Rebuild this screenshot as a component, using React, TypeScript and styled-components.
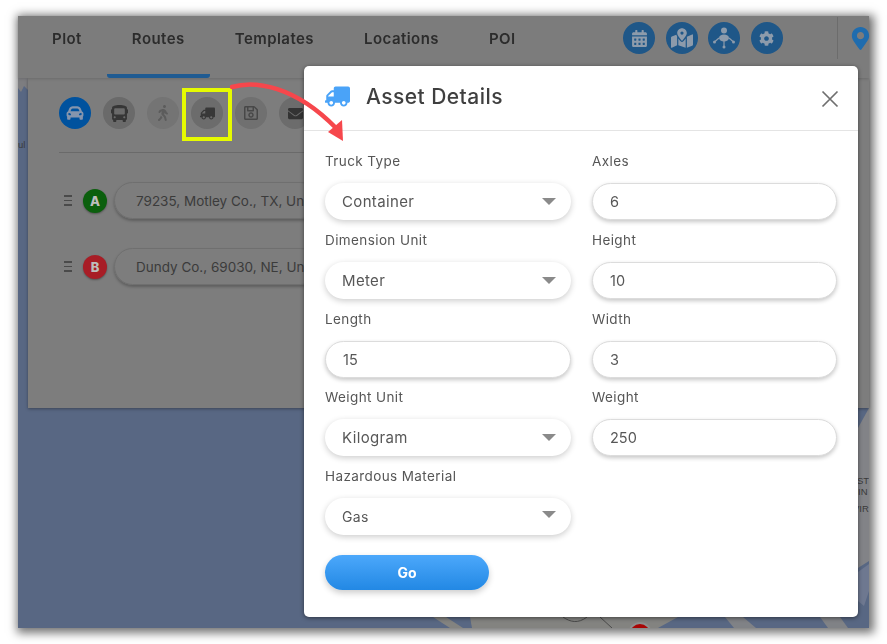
import { ReactNode } from "react";
import styled, { createGlobalStyle } from "styled-components";
import {
    FaBus,
    FaCalendarAlt,
    FaCarAlt,
    FaCog,
    FaEnvelope,
    FaMapMarkedAlt,
    FaMapMarkerAlt,
    FaRegSave,
    FaTruck,
    FaWalking,
} from "react-icons/fa";

const tabs = ["Plot", "Routes", "Templates", "Locations", "POI"];

const NetworkIcon = () => (
    <svg width="24" height="24" viewBox="0 0 24 24" fill="currentColor" stroke="currentColor">
        <circle cx="12" cy="4.5" r="3" stroke="none" />
        <ellipse cx="12" cy="12" rx="5" ry="3.4" stroke="none" />
        <path d="M7 12 L3 15.5 M17 12 L21 15.5 M12 15 V20" strokeWidth="1.2" fill="none" />
        <circle cx="2.5" cy="16" r="1.5" stroke="none" />
        <circle cx="21.5" cy="16" r="1.5" stroke="none" />
        <circle cx="12" cy="21" r="1.5" stroke="none" />
    </svg>
);

const MapBackdrop = () => (
    <MapSvg viewBox="0 0 851 612">
        <rect width="851" height="612" fill="#586783" />
        <path d="M0 62 H10 V74 L6 70 L3 76 L0 72 Z" fill="#7d7d80" />
        <path d="M840 412 L851 392 V545 L840 552 Z" fill="#828387" />
        <path d="M840 556 L851 548 V575 L846 590 L840 585 Z" fill="#6e7890" />
        <path d="M432 612 L415 601 H428 L445 612 Z" fill="#838380" />
        <path d="M454 612 L452 601 H660 L640 612 Z" fill="#838380" />
        <path d="M707 601 H725 L738 612 H716 Z" fill="#808286" />
        <path d="M802 601 H822 L830 612 H810 Z" fill="#808286" />
        <path d="M545 601 C552 606 560 608 569 601 M582 601 L594 612" fill="none" stroke="#4a4a4a" strokeWidth="1" />
        <circle cx="622" cy="618" r="12" fill="#8e8e8e" />
        <circle cx="622" cy="618" r="10" fill="#a80505" />
        <MapLabel x="839" y="468">ST</MapLabel>
        <MapLabel x="840" y="479">IN</MapLabel>
        <MapLabel x="835" y="496">VIR</MapLabel>
        <MapLabel x="0" y="132" fill="#27365a">ul</MapLabel>
    </MapSvg>
);

const Field = ({ label, children }: { label: string; children: ReactNode }) => (
    <FieldBox>
        <Label>{label}</Label>
        {children}
    </FieldBox>
);

const App = () => {
    return (
        <Frame>
            <GlobalStyle />
            <MapBackdrop />
            <Nav>
                <Tabs>
                    {tabs.map((tab) => (
                        <Tab key={tab} $active={tab === "Routes"}>
                            {tab}
                        </Tab>
                    ))}
                </Tabs>
                <NavTools>
                    <NavButton><FaCalendarAlt size={17} /></NavButton>
                    <NavButton><FaMapMarkedAlt size={22} /></NavButton>
                    <NavButton><NetworkIcon /></NavButton>
                    <NavButton><FaCog size={15} /></NavButton>
                </NavTools>
                <PinCell>
                    <FaMapMarkerAlt size={23} />
                </PinCell>
            </Nav>
            <Panel>
                <ModeRow>
                    <ModeButton $bg="#00529e" $fg="#8595ad"><FaCarAlt size={18} /></ModeButton>
                    <ModeButton $bg="#6a6a6a" $fg="#363636"><FaBus size={17} /></ModeButton>
                    <ModeButton $bg="#747474" $fg="#5c5c5c"><FaWalking size={16} /></ModeButton>
                    <ModeButton $bg="#6c6c6c" $fg="#383838"><FlippedTruck size={15} /></ModeButton>
                    <ModeButton $bg="#707070" $fg="#484848"><FaRegSave size={16} /></ModeButton>
                    <ModeButton $bg="#6c6c6c" $fg="#333333"><FaEnvelope size={15} /></ModeButton>
                </ModeRow>
                <Divider />
                <StopRow>
                    <Handle><i /><i /><i /></Handle>
                    <Badge $bg="#0b5f0d">A</Badge>
                    <StopPill>79235, Motley Co., TX, Uni</StopPill>
                </StopRow>
                <StopRow>
                    <Handle><i /><i /><i /></Handle>
                    <Badge $bg="#a81d26">B</Badge>
                    <StopPill>Dundy Co., 69030, NE, Un</StopPill>
                </StopRow>
            </Panel>

            <Modal>
                <ModalHeader>
                    <FlippedTruck size={25} color="#4aa3f8" />
                    <ModalTitle>Asset Details</ModalTitle>
                    <CloseButton>
                        <svg width="18" height="18" viewBox="0 0 18 18" fill="none" stroke="#6f6f6f" strokeWidth="1.7">
                            <path d="M1.5 1.5 L16.5 16.5 M16.5 1.5 L1.5 16.5" />
                        </svg>
                    </CloseButton>
                </ModalHeader>
                <ModalBody>
                    <Field label="Truck Type">
                        <SelectBox>Container</SelectBox>
                    </Field>
                    <Field label="Axles">
                        <TextBox readOnly value="6" />
                    </Field>
                    <Field label="Dimension Unit">
                        <SelectBox>Meter</SelectBox>
                    </Field>
                    <Field label="Height">
                        <TextBox readOnly value="10" />
                    </Field>
                    <Field label="Length">
                        <TextBox readOnly value="15" />
                    </Field>
                    <Field label="Width">
                        <TextBox readOnly value="3" />
                    </Field>
                    <Field label="Weight Unit">
                        <SelectBox>Kilogram</SelectBox>
                    </Field>
                    <Field label="Weight">
                        <TextBox readOnly value="250" />
                    </Field>
                    <Field label="Hazardous Material">
                        <SelectBox $small>Gas</SelectBox>
                    </Field>
                </ModalBody>
                <GoButton type="button">Go</GoButton>
            </Modal>

            <Callout />
            <ArrowSvg width="130" height="70" viewBox="0 0 130 70">
                <path d="M2 9 C25 2 65 8 106 50" fill="none" stroke="#f6474c" strokeWidth="4.5" strokeLinecap="round" />
                <path d="M113 63 L98 54 L112 42 Z" fill="#f6474c" />
            </ArrowSvg>
        </Frame>
    );
};

const GlobalStyle = createGlobalStyle`
    body {
        margin: 0;
        background: #ffffff;
        overflow: hidden;
        font-family: Inter, "Open Sans", sans-serif;
    }
`;

const Frame = styled.div`
    position: relative;
    width: 851px;
    height: 612px;
    margin: 16px 18px;
    box-shadow: 2px 2px 9px 3px rgba(0, 0, 0, 0.55);
    filter: blur(0.4px);
`;

const MapSvg = styled.svg`
    position: absolute;
    inset: 0;
    width: 851px;
    height: 612px;
`;

const MapLabel = styled.text`
    font-family: "Liberation Sans", sans-serif;
    font-size: 9.5px;
    fill: #3a3a3a;
`;

const Nav = styled.div`
    position: relative;
    display: flex;
    align-items: stretch;
    height: 62px;
    padding-left: 9px;
    background: #7c7c7c;
    box-shadow: 0 1px 3px rgba(0, 0, 0, 0.15);
    z-index: 1;
`;

const Tabs = styled.div`
    display: flex;
    flex: none;
    width: 596px;
`;

const Tab = styled.div<{ $active?: boolean }>`
    display: flex;
    align-items: center;
    padding: 0 25px 14px;
    height: 62px;
    box-sizing: border-box;
    font-size: 15px;
    font-weight: 600;
    letter-spacing: 0.45px;
    color: #2c2c2c;
    border-bottom: 4px solid ${(p) => (p.$active ? "#1f5b92" : "transparent")};
    border-radius: 0 0 3px 3px;
`;

const NavTools = styled.div`
    display: flex;
    flex: none;
    align-items: center;
    gap: 10.5px;
    padding-bottom: 18px;
`;

const NavButton = styled.div`
    display: flex;
    align-items: center;
    justify-content: center;
    width: 32px;
    height: 32px;
    border-radius: 50%;
    background: #1f5788;
    color: #8d9bab;
`;

const PinCell = styled.div`
    display: flex;
    flex: none;
    align-items: center;
    height: 42px;
    margin: 1px -3px 0 54px;
    padding-left: 11px;
    border-left: 1px solid #6c6c6c;
    color: #1f6cae;
`;

const Panel = styled.div`
    position: relative;
    margin-left: 10px;
    height: 330px;
    padding: 19px 0 0 31px;
    box-sizing: border-box;
    background: #7d7d7d;
    box-shadow: 0 1px 3px rgba(0, 0, 0, 0.35);
`;

const ModeRow = styled.div`
    display: flex;
    gap: 12px;
`;

const ModeButton = styled.div<{ $bg: string; $fg: string }>`
    display: flex;
    align-items: center;
    justify-content: center;
    width: 32px;
    height: 32px;
    border-radius: 50%;
    background: ${(p) => p.$bg};
    color: ${(p) => p.$fg};
`;

const FlippedTruck = styled(FaTruck)`
    transform: scaleX(-1);
`;

const Divider = styled.div`
    width: 260px;
    height: 1px;
    margin: 23px 0 29px;
    background: #6a6a6a;
`;

const StopRow = styled.div`
    display: flex;
    align-items: center;
    height: 37px;
    margin-bottom: 29px;
`;

const Handle = styled.div`
    display: flex;
    flex-direction: column;
    gap: 3px;
    width: 8px;
    margin: 0 11px 0 5px;

    i {
        display: block;
        height: 1.5px;
        background: #4a4a4a;
    }
`;

const Badge = styled.div<{ $bg: string }>`
    display: flex;
    align-items: center;
    justify-content: center;
    flex: none;
    width: 24px;
    height: 24px;
    border-radius: 50%;
    background: ${(p) => p.$bg};
    color: #bdbdbd;
    font-size: 13px;
    font-weight: 800;
    box-shadow: 0 1px 2px rgba(0, 0, 0, 0.35);
`;

const StopPill = styled.div`
    flex: none;
    width: 205px;
    height: 37px;
    margin-left: 7px;
    padding-left: 21px;
    box-sizing: border-box;
    line-height: 36px;
    font-size: 13.5px;
    white-space: nowrap;
    color: #3b3b3b;
    border: 1px solid #6f6f6f;
    border-radius: 19px;
    box-shadow: 0 2px 3px rgba(0, 0, 0, 0.25);
`;

const Modal = styled.div`
    position: absolute;
    left: 286px;
    top: 50px;
    width: 554px;
    height: 551px;
    z-index: 2;
    background: #ffffff;
    border-radius: 5px;
    box-shadow: 0 1px 4px rgba(0, 0, 0, 0.5);
`;

const ModalHeader = styled.div`
    display: flex;
    align-items: center;
    height: 65px;
    padding: 0 19px 3px 21px;
    box-sizing: border-box;
    border-bottom: 1px solid #e4e4e4;
`;

const ModalTitle = styled.div`
    flex: 1;
    margin-left: 16px;
    font-size: 21px;
    font-weight: 500;
    letter-spacing: 0.45px;
    color: #3f3f3f;
`;

const CloseButton = styled.div`
    display: flex;
    margin-top: 4px;
`;

const ModalBody = styled.div`
    display: grid;
    grid-template-columns: 246px 245px;
    column-gap: 21px;
    row-gap: 9.75px;
    padding: 20px 0 0 21px;
`;

const FieldBox = styled.div`
    display: flex;
    flex-direction: column;
`;

const Label = styled.div`
    height: 20px;
    margin-bottom: 12px;
    line-height: 20px;
    font-size: 13.5px;
    letter-spacing: 0.4px;
    color: #565656;
`;

const SelectBox = styled.div<{ $small?: boolean }>`
    position: relative;
    height: 37px;
    padding-left: 17px;
    line-height: 37px;
    font-size: ${(p) => (p.$small ? "14px" : "15px")};
    letter-spacing: 0.35px;
    color: #575757;
    background: #ffffff;
    border-radius: 19px;
    box-shadow: 0 2px 6px rgba(0, 0, 0, 0.2);

    &::after {
        content: "";
        position: absolute;
        right: 15px;
        top: ${(p) => (p.$small ? "13px" : "15px")};
        border-left: 7px solid transparent;
        border-right: 7px solid transparent;
        border-top: 7px solid #8a8a8a;
    }
`;

const TextBox = styled.input`
    height: 37px;
    padding: 0 0 0 17px;
    box-sizing: border-box;
    font-family: inherit;
    font-size: 14.5px;
    color: #575757;
    background: #ffffff;
    border: 1px solid #dcdcdc;
    border-radius: 19px;
    outline: none;
    box-shadow: 0 2px 4px rgba(0, 0, 0, 0.22);
`;

const GoButton = styled.button`
    display: block;
    width: 164px;
    height: 35px;
    margin: 20px 0 0 21px;
    border: none;
    border-radius: 18px;
    font-family: inherit;
    font-size: 14px;
    font-weight: 700;
    color: #ffffff;
    background: linear-gradient(#4ca8fb, #2288e4);
    box-shadow: 0 3px 6px rgba(0, 0, 0, 0.2);
`;

const Callout = styled.div`
    position: absolute;
    left: 164px;
    top: 72px;
    width: 50px;
    height: 53px;
    box-sizing: border-box;
    border: 4px solid #e6fb00;
    z-index: 3;
`;

const ArrowSvg = styled.svg`
    position: absolute;
    left: 212px;
    top: 62px;
    z-index: 3;
`;

export default App;
